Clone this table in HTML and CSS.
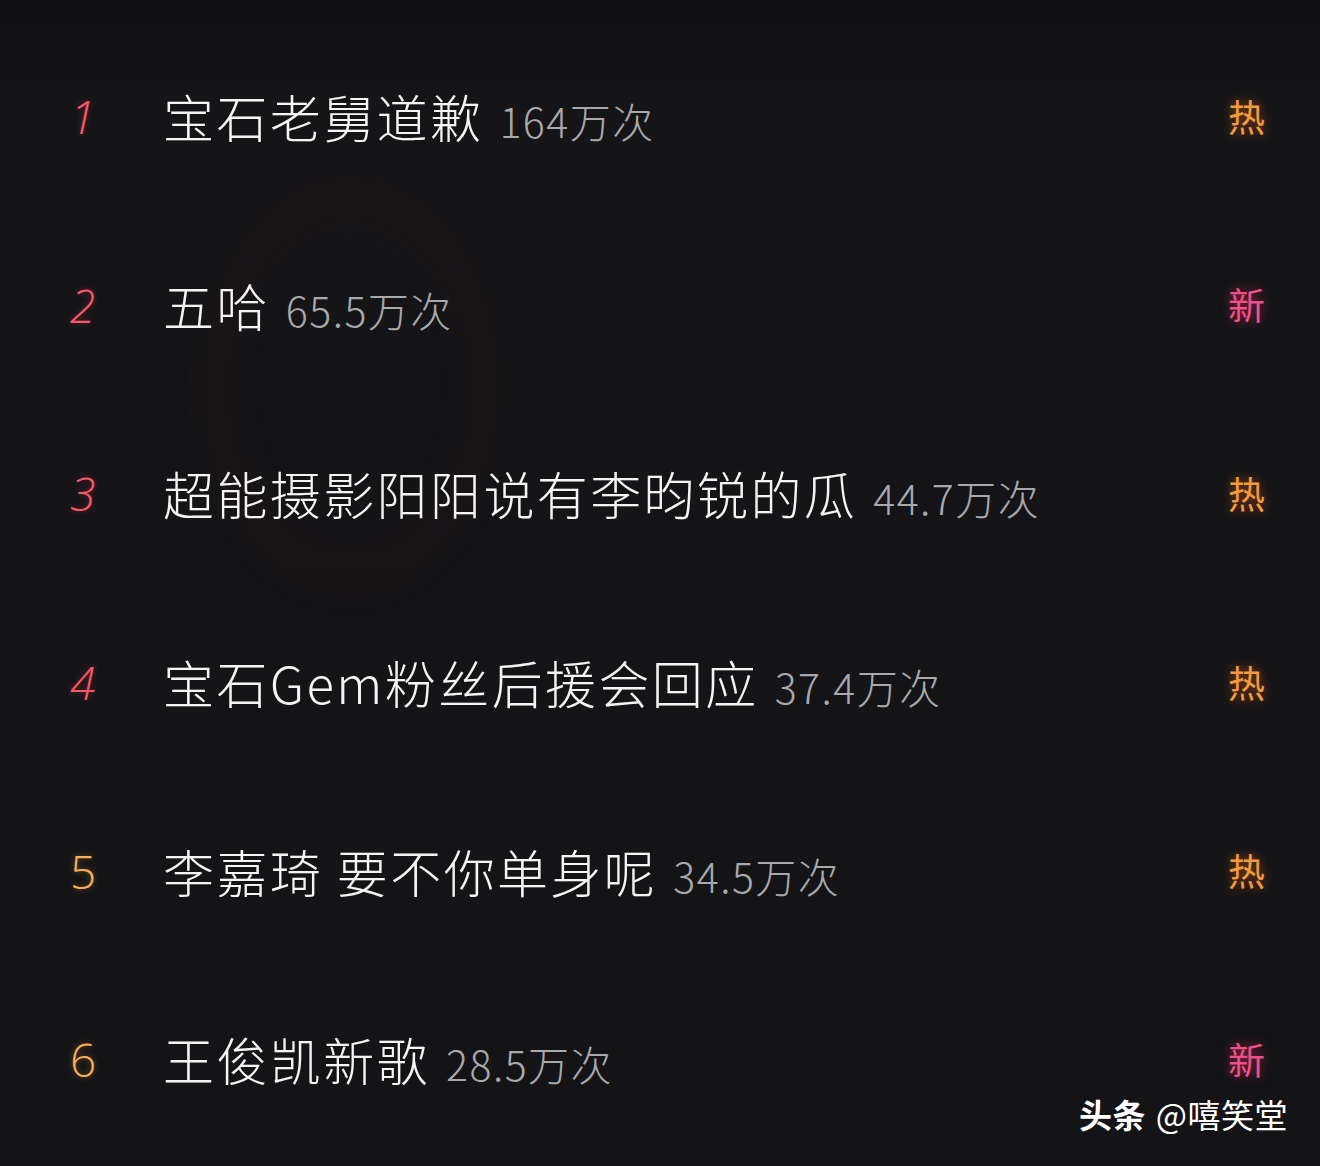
FILE: index.html
```html
<!DOCTYPE html>
<html lang="zh-CN">
<head>
    <meta charset="UTF-8">
    <meta name="viewport" content="width=device-width, initial-scale=1.0">
    <title>热搜榜</title>
    <link rel="stylesheet" href="styles.css">
</head>
<body>

    <!-- 背景里的淡色圆环 -->
    <div class="ghost-ring"></div>

    <!-- 热搜列表 -->
    <ul class="hot-list">
        <li class="hot-item">
            <span class="rank rank-red slant">1</span>
            <span class="title">宝石老舅道歉</span>
            <span class="count">164万次</span>
            <span class="tag tag-hot">热</span>
        </li>
        <li class="hot-item">
            <span class="rank rank-red slant">2</span>
            <span class="title">五哈</span>
            <span class="count">65.5万次</span>
            <span class="tag tag-new">新</span>
        </li>
        <li class="hot-item">
            <span class="rank rank-red slant">3</span>
            <span class="title">超能摄影阳阳说有李昀锐的瓜</span>
            <span class="count">44.7万次</span>
            <span class="tag tag-hot">热</span>
        </li>
        <li class="hot-item">
            <span class="rank rank-red slant">4</span>
            <span class="title">宝石Gem粉丝后援会回应</span>
            <span class="count">37.4万次</span>
            <span class="tag tag-hot">热</span>
        </li>
        <li class="hot-item">
            <span class="rank rank-gold">5</span>
            <span class="title">李嘉琦 要不你单身呢</span>
            <span class="count">34.5万次</span>
            <span class="tag tag-hot">热</span>
        </li>
        <li class="hot-item">
            <span class="rank rank-gold">6</span>
            <span class="title">王俊凯新歌</span>
            <span class="count">28.5万次</span>
            <span class="tag tag-new">新</span>
        </li>
    </ul>

    <!-- 水印 -->
    <div class="watermark"><b>头条</b> @嘻笑堂</div>

</body>
</html>
```

FILE: styles.css
```css
/* 页面底色 */
body {
    margin: 0;
    padding: 0;
    height: 1166px;
    overflow: hidden;
    position: relative;
    background: linear-gradient(180deg, #0f0f12 0%, #151518 8%, #141417 100%);
    font-family: "Noto Sans CJK SC", "Noto Sans", sans-serif;
    color: #f2f2f2;
}

/* 淡淡的红色圆环 */
.ghost-ring {
    position: absolute;
    left: 195px;
    top: 170px;
    width: 310px;
    height: 430px;
    border-radius: 50%;
    background: radial-gradient(ellipse at center, rgba(20, 18, 20, 0) 45%, rgba(50, 22, 18, 0.18) 62%, rgba(40, 18, 16, 0.08) 75%, rgba(20, 18, 20, 0) 85%);
    filter: blur(8px);
}

.hot-list {
    list-style: none;
    margin: 0;
    padding: 22px 0 0 0;
    position: relative;
}

.hot-item {
    height: 188.6px;
    display: flex;
    align-items: center;
    padding: 0 55px 0 70px;
}

/* 排名数字 */
.rank {
    width: 93px;
    font-family: "Open Sans", "Noto Sans", sans-serif;
    font-weight: 300;
    font-size: 46px;
    line-height: 1;
}

.slant {
    font-style: italic;
}

.rank-red {
    color: #f8586a;
    text-shadow: 0 0 6px rgba(255, 70, 90, 0.35);
}

.rank-gold {
    color: #f5b055;
    text-shadow: 0 0 6px rgba(245, 160, 60, 0.4);
}

.title {
    font-size: 51px;
    font-weight: 300;
    letter-spacing: 2.4px;
    color: #f4f4f4;
    white-space: nowrap;
}

.count {
    margin-left: 16px;
    margin-top: 8px;
    font-size: 41px;
    font-weight: 300;
    letter-spacing: 1.5px;
    color: #a9a9ad;
    white-space: nowrap;
}

/* 右侧标签 */
.tag {
    margin-left: auto;
    font-size: 37px;
    font-weight: 400;
    line-height: 1;
    padding: 8px;
    margin-right: -8px;
    background: radial-gradient(ellipse at center, rgba(60, 30, 20, 0.25) 0%, rgba(20, 20, 20, 0) 75%);
}

.tag-hot {
    color: #f49a3c;
    text-shadow: 0 0 10px rgba(240, 110, 30, 0.55);
}

.tag-new {
    color: #f0508a;
    text-shadow: 0 0 10px rgba(230, 40, 100, 0.55);
}

.watermark {
    position: absolute;
    right: 32px;
    bottom: 28px;
    font-size: 33px;
    color: #ffffff;
    letter-spacing: 0.5px;
}

.watermark b {
    font-weight: 700;
    margin-right: 2px;
}
```
